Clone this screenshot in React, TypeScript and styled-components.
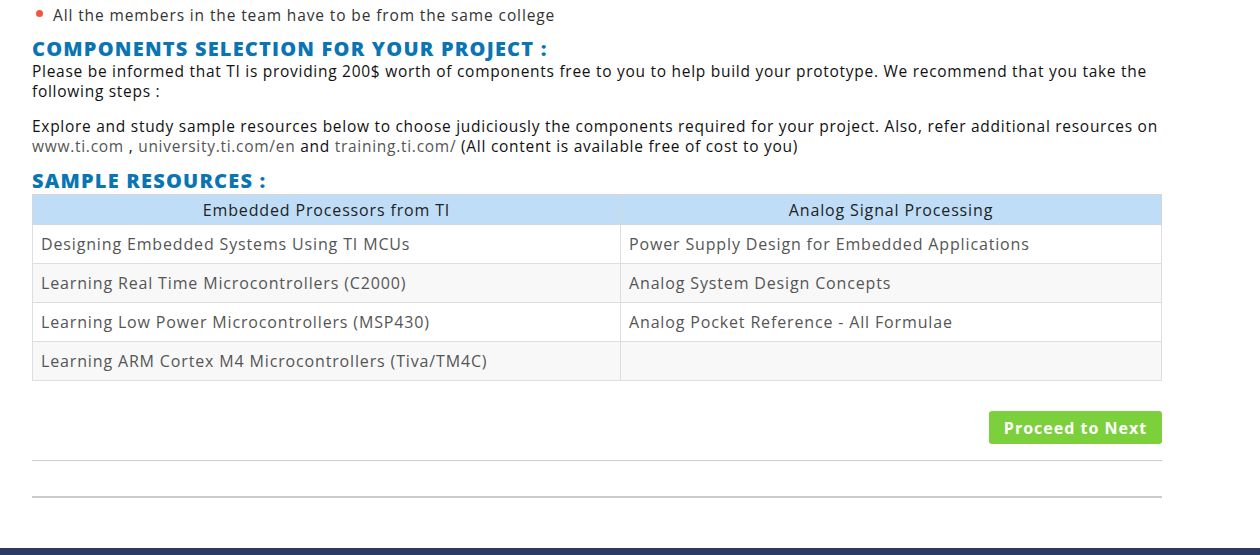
import styled, { createGlobalStyle } from "styled-components";

const GlobalStyle = createGlobalStyle`
  html, body {
    margin: 0;
    padding: 0;
    background: #fff;
  }
  body {
    font-family: "Open Sans", "Liberation Sans", sans-serif;
  }
`;

const Page = styled.div`
  width: 1260px;
  height: 555px;
  display: flex;
  flex-direction: column;
  overflow: hidden;
`;

const Content = styled.div`
  width: 1130px;
  padding: 4px 0 0 32px;
  flex: 1;
`;

const Bullets = styled.ul`
  list-style: none;
  margin: 0;
  padding: 0 0 0 4px;
`;

const Bullet = styled.li`
  display: flex;
  align-items: center;
  gap: 10px;
  font-size: 15.5px;
  letter-spacing: 0.88px;
  line-height: 22px;
  color: #333;

  &::before {
    content: "";
    width: 7px;
    height: 7px;
    border-radius: 50%;
    background: #f0563a;
    margin-bottom: 3px;
  }
`;

const Heading = styled.h2<{ $top: number }>`
  margin: ${(p) => p.$top}px 0 2px;
  font-size: 20px;
  line-height: 20px;
  font-weight: 800;
  color: #0b75b4;
  letter-spacing: 1.2px;
`;

const Para = styled.p`
  margin: 0 0 15px;
  font-size: 15.5px;
  letter-spacing: 0.72px;
  line-height: 20px;
  color: #111;
`;

const Link = styled.a`
  color: #555;
  text-decoration: none;
`;

const Table = styled.table`
  width: 100%;
  border-collapse: collapse;
  table-layout: fixed;
  margin-top: 3px;
  font-size: 16px;
  letter-spacing: 0.85px;
`;

const HeadCell = styled.th<{ $w?: number }>`
  background: #c0ddf7;
  border: 1px solid #d6d6d6;
  font-weight: 400;
  color: #222;
  height: 29px;
  padding: 0 8px;
  width: ${(p) => (p.$w ? `${p.$w}px` : "auto")};
`;

const Row = styled.tr<{ $alt: boolean }>`
  background: ${(p) => (p.$alt ? "#f8f8f8" : "#fff")};
`;

const Cell = styled.td`
  border: 1px solid #dedede;
  color: #555;
  height: 38px;
  padding: 0 8px;
`;

const Actions = styled.div`
  display: flex;
  justify-content: flex-end;
  margin-top: 30px;
`;

const NextButton = styled.button`
  background: #7bd03c;
  color: #fff;
  border: none;
  border-radius: 3px;
  font-family: inherit;
  font-weight: 700;
  font-size: 16px;
  letter-spacing: 1px;
  width: 173px;
  height: 33px;
  cursor: pointer;
`;

const Rule = styled.hr<{ $thick?: boolean }>`
  border: none;
  margin: ${(p) => (p.$thick ? "35px 0 0" : "16px 0 0")};
  height: ${(p) => (p.$thick ? 2 : 1)}px;
  background: #cccccc;
`;

const Footer = styled.div`
  height: 7px;
  background: #2c3a63;
`;

const resources = [
  ["Designing Embedded Systems Using TI MCUs", "Power Supply Design for Embedded Applications"],
  ["Learning Real Time Microcontrollers (C2000)", "Analog System Design Concepts"],
  ["Learning Low Power Microcontrollers (MSP430)", "Analog Pocket Reference - All Formulae"],
  ["Learning ARM Cortex M4 Microcontrollers (Tiva/TM4C)", ""],
];

export default function App() {
  return (
    <Page>
      <GlobalStyle />
      <Content>
        <Bullets>
          <Bullet>All the members in the team have to be from the same college</Bullet>
        </Bullets>
        <Heading $top={13}>COMPONENTS SELECTION FOR YOUR PROJECT :</Heading>
        <Para>
          Please be informed that TI is providing 200$ worth of components free to you to help build
          your prototype. We recommend that you take the following steps :
        </Para>
        <Para>
          Explore and study sample resources below to choose judiciously the components required for
          your project. Also, refer additional resources on <Link href="#">www.ti.com</Link> ,{" "}
          <Link href="#">university.ti.com/en</Link> and <Link href="#">training.ti.com/</Link> (All
          content is available free of cost to you)
        </Para>
        <Heading $top={0}>SAMPLE RESOURCES :</Heading>
        <Table>
          <thead>
            <tr>
              <HeadCell $w={571}>Embedded Processors from TI</HeadCell>
              <HeadCell>Analog Signal Processing</HeadCell>
            </tr>
          </thead>
          <tbody>
            {resources.map((r, i) => (
              <Row key={i} $alt={i % 2 === 1}>
                <Cell>{r[0]}</Cell>
                <Cell>{r[1]}</Cell>
              </Row>
            ))}
          </tbody>
        </Table>
        <Actions>
          <NextButton>Proceed to Next</NextButton>
        </Actions>
        <Rule />
        <Rule $thick />
      </Content>
      <Footer />
    </Page>
  );
}
